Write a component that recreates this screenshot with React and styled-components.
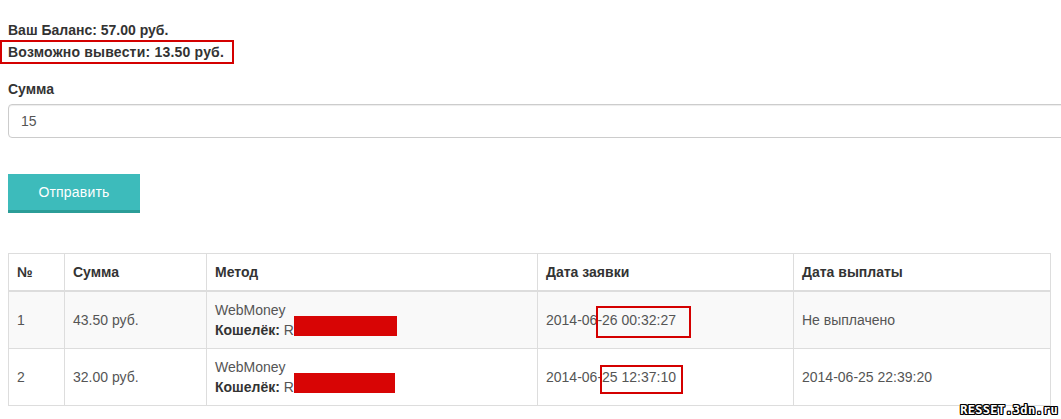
import React from 'react';
import styled, { createGlobalStyle } from 'styled-components';

const GlobalStyle = createGlobalStyle`
    html, body {
        margin: 0;
        padding: 0;
        overflow: hidden;
        background: #fff;
    }
    body {
        font-family: "Liberation Sans", Arial, Helvetica, sans-serif;
        font-size: 14px;
        line-height: 20px;
        color: #333;
    }
`;

const Page = styled.div`
    position: relative;
    width: 1061px;
    height: 419px;
    padding: 20px 0 0 8px;
    box-sizing: border-box;
    overflow: hidden;
`;

const BalanceLine = styled.div`
    font-weight: bold;
`;

const Marked = styled.span`
    display: inline-block;
    margin-left: -8px;
    padding: 0 8px 0 6px;
    border: 2px solid #d40000;
    font-weight: bold;
    letter-spacing: 0.2px;
`;

const Label = styled.label`
    display: block;
    margin: 15px 0 5px;
    font-weight: bold;
`;

const Input = styled.input`
    display: block;
    width: 1100px;
    height: 34px;
    box-sizing: border-box;
    padding: 6px 12px;
    border: 1px solid #ccc;
    border-radius: 4px;
    box-shadow: inset 0 1px 1px rgba(0, 0, 0, 0.075);
    font-family: inherit;
    font-size: 14px;
    color: #555;
    outline: none;
`;

const Button = styled.button`
    display: block;
    margin-top: 36px;
    width: 132px;
    height: 39px;
    border: 0;
    border-bottom: 3px solid #2b9d98;
    background: #3dbbbb;
    color: #fff;
    font-family: inherit;
    font-size: 14px;
    letter-spacing: 0.2px;
    padding: 0;
    cursor: pointer;
`;

const Table = styled.table`
    margin-top: 40px;
    width: 1042px;
    border-collapse: collapse;
    table-layout: fixed;
    border: 1px solid #ddd;
`;

const Th = styled.th`
    box-sizing: border-box;
    width: ${p => p.$w}px;
    text-align: left;
    padding: 8px;
    border: 1px solid #ddd;
    border-bottom-width: 2px;
    font-weight: bold;
    color: #333;
    vertical-align: middle;
`;

const Tr = styled.tr`
    background: ${p => (p.$striped ? '#f9f9f9' : '#fff')};
`;

const Td = styled.td`
    padding: 8px;
    border: 1px solid #ddd;
    color: #555;
    vertical-align: middle;
`;

const Wallet = styled.b`
    color: #333;
`;

const Redacted = styled.span`
    display: inline-block;
    vertical-align: top;
    margin-top: -4px;
    width: ${p => p.$w}px;
    height: 20px;
    background: #d80505;
`;

const DateText = styled.span`
    position: relative;
`;

const Highlight = styled.span`
    position: absolute;
    left: ${p => p.$x}px;
    top: ${p => p.$y}px;
    width: ${p => p.$w}px;
    height: ${p => p.$h}px;
    box-sizing: border-box;
    border: 2px solid #d40000;
`;

const Watermark = styled.div`
    position: absolute;
    right: 3px;
    bottom: 2px;
    font-family: "DejaVu Sans Mono", monospace;
    font-weight: bold;
    font-size: 12px;
    line-height: 13px;
    letter-spacing: 0.3px;
    color: #fff;
    text-shadow: 1px 0 0 #000, -1px 0 0 #000, 0 1px 0 #000, 0 -1px 0 #000,
        1px 1px 0 #000, -1px -1px 0 #000, 1px -1px 0 #000, -1px 1px 0 #000;
`;

const rows = [
    {
        n: 1,
        sum: '43.50 руб.',
        redact: 103,
        date: '2014-06-26 00:32:27',
        box: { x: 50, y: -6, w: 95, h: 32 },
        paid: 'Не выплачено',
    },
    {
        n: 2,
        sum: '32.00 руб.',
        redact: 101,
        date: '2014-06-25 12:37:10',
        box: { x: 54, y: -4, w: 83, h: 29 },
        paid: '2014-06-25 22:39:20',
    },
];

export default function App() {
    return (
        <Page>
            <GlobalStyle />
            <BalanceLine>Ваш Баланс: 57.00 руб.</BalanceLine>
            <Marked>Возможно вывести: 13.50 руб.</Marked>

            <Label>Сумма</Label>
            <Input defaultValue='15' />

            <Button>Отправить</Button>

            <Table>
                <thead>
                    <tr>
                        <Th $w={56}>№</Th>
                        <Th $w={142}>Сумма</Th>
                        <Th $w={331}>Метод</Th>
                        <Th $w={256}>Дата заявки</Th>
                        <Th $w={257}>Дата выплаты</Th>
                    </tr>
                </thead>
                <tbody>
                    {rows.map(r => (
                        <Tr key={r.n} $striped={r.n % 2 === 1}>
                            <Td>{r.n}</Td>
                            <Td>{r.sum}</Td>
                            <Td>
                                WebMoney
                                <br />
                                <Wallet>Кошелёк:</Wallet> R
                                <Redacted $w={r.redact} />
                            </Td>
                            <Td>
                                <DateText>
                                    {r.date}
                                    <Highlight $x={r.box.x} $y={r.box.y} $w={r.box.w} $h={r.box.h} />
                                </DateText>
                            </Td>
                            <Td>{r.paid}</Td>
                        </Tr>
                    ))}
                </tbody>
            </Table>

            <Watermark>RESSET.3dn.ru</Watermark>
        </Page>
    );
}
